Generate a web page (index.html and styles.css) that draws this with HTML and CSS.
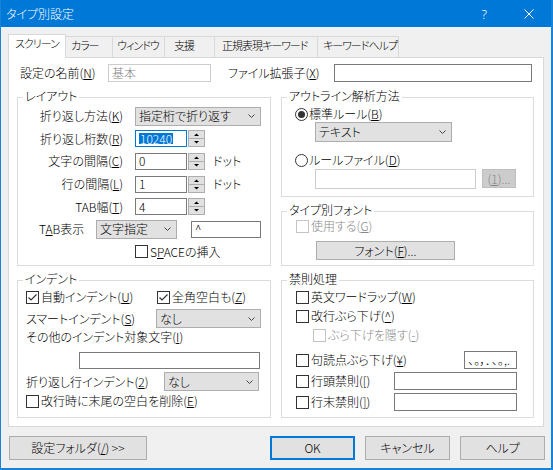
FILE: index.html
```html
<!DOCTYPE html>
<html lang="ja">
<head>
<meta charset="utf-8">
<title>タイプ別設定</title>
<link rel="stylesheet" href="styles.css">
</head>
<body>
<div class="window">
  <div class="titlebar">
    <span class="title">タイプ別設定</span>
    <span class="help">?</span>
    <svg class="close" width="10" height="10" viewBox="0 0 10 10"><path d="M0.5 0.5L9.5 9.5M9.5 0.5L0.5 9.5" stroke="#fff" stroke-width="1"/></svg>
  </div>
  <div class="client">
    <div class="tabs">
      <div class="tab active t1">スクリーン</div>
      <div class="tab t2">カラー</div>
      <div class="tab t3">ウィンドウ</div>
      <div class="tab t4">支援</div>
      <div class="tab t5">正規表現キーワード</div>
      <div class="tab t6 last">キーワードヘルプ</div>
    </div>
    <div class="page">
      <div class="name-row">
        <span class="name-lbl">設定の名前(<u>N</u>)</span>
        <div class="edit disabled w-name">基本</div>
        <span class="ext-lbl">ファイル拡張子(<u>X</u>)</span>
        <div class="edit w-ext"></div>
      </div>
      <div class="columns">
        <div class="col col-left">
          <div class="group g-layout">
            <div class="gtitle">レイアウト</div>
            <div class="lrow">
              <span class="lbl-r">折り返し方法(<u>K</u>)</span>
              <div class="combo w-wrap"><span>指定桁で折り返す</span><svg class="chev" width="7" height="4" viewBox="0 0 7 4"><polyline points="0.5,0.5 3.5,3.5 6.5,0.5" fill="none" stroke="#444"/></svg></div>
            </div>
            <div class="lrow">
              <span class="lbl-r">折り返し桁数(<u>R</u>)</span>
              <div class="spin">
                <div class="edit spin-edit focus"><span class="sel">10240</span></div>
                <svg class="updown" width="17" height="17" viewBox="0 0 17 17"><rect x="0.5" y="0.5" width="16" height="16" fill="#e1e1e1" stroke="#adadad"/><line x1="1" y1="8.5" x2="16" y2="8.5" stroke="#adadad"/><path d="M8.5 3.5L11 6L6 6Z" fill="#000"/><path d="M6 11L11 11L8.5 13.5Z" fill="#000"/></svg>
              </div>
            </div>
            <div class="lrow">
              <span class="lbl-r">文字の間隔(<u>C</u>)</span>
              <div class="spin">
                <div class="edit spin-edit">0</div>
                <svg class="updown" width="17" height="17" viewBox="0 0 17 17"><rect x="0.5" y="0.5" width="16" height="16" fill="#e1e1e1" stroke="#adadad"/><line x1="1" y1="8.5" x2="16" y2="8.5" stroke="#adadad"/><path d="M8.5 3.5L11 6L6 6Z" fill="#000"/><path d="M6 11L11 11L8.5 13.5Z" fill="#000"/></svg>
              </div>
              <span class="unit">ドット</span>
            </div>
            <div class="lrow">
              <span class="lbl-r">行の間隔(<u>L</u>)</span>
              <div class="spin">
                <div class="edit spin-edit">1</div>
                <svg class="updown" width="17" height="17" viewBox="0 0 17 17"><rect x="0.5" y="0.5" width="16" height="16" fill="#e1e1e1" stroke="#adadad"/><line x1="1" y1="8.5" x2="16" y2="8.5" stroke="#adadad"/><path d="M8.5 3.5L11 6L6 6Z" fill="#000"/><path d="M6 11L11 11L8.5 13.5Z" fill="#000"/></svg>
              </div>
              <span class="unit">ドット</span>
            </div>
            <div class="lrow">
              <span class="lbl-r">TAB幅(<u>T</u>)</span>
              <div class="spin">
                <div class="edit spin-edit">4</div>
                <svg class="updown" width="17" height="17" viewBox="0 0 17 17"><rect x="0.5" y="0.5" width="16" height="16" fill="#e1e1e1" stroke="#adadad"/><line x1="1" y1="8.5" x2="16" y2="8.5" stroke="#adadad"/><path d="M8.5 3.5L11 6L6 6Z" fill="#000"/><path d="M6 11L11 11L8.5 13.5Z" fill="#000"/></svg>
              </div>
            </div>
            <div class="lrow">
              <span class="lbl-tab">T<u>A</u>B表示</span>
              <div class="combo w-tabsel"><span>文字指定</span><svg class="chev" width="7" height="4" viewBox="0 0 7 4"><polyline points="0.5,0.5 3.5,3.5 6.5,0.5" fill="none" stroke="#444"/></svg></div>
              <div class="edit w-caret">^</div>
            </div>
            <div class="lrow row-space">
              <span class="cb"></span><span>S<u>P</u>ACEの挿入</span>
            </div>
          </div>

          <div class="group g-indent">
            <div class="gtitle">インデント</div>
            <div class="irow r1">
              <div class="chk w-auto"><span class="cb on"><svg width="11" height="11" viewBox="0 0 11 11"><polyline points="1.5,5.5 4,8 9.5,2.5" fill="none" stroke="#333" stroke-width="1.2"/></svg></span><span>自動インデント(<u>U</u>)</span></div>
              <div class="chk"><span class="cb on"><svg width="11" height="11" viewBox="0 0 11 11"><polyline points="1.5,5.5 4,8 9.5,2.5" fill="none" stroke="#333" stroke-width="1.2"/></svg></span><span>全角空白も(<u>Z</u>)</span></div>
            </div>
            <div class="irow r2">
              <span class="w-smart">スマートインデント(<u>S</u>)</span>
              <div class="combo w-smartsel"><span>なし</span><svg class="chev" width="7" height="4" viewBox="0 0 7 4"><polyline points="0.5,0.5 3.5,3.5 6.5,0.5" fill="none" stroke="#444"/></svg></div>
            </div>
            <div class="irow r3"><span>その他のインデント対象文字(<u>I</u>)</span></div>
            <div class="irow r4"><div class="edit w-other"></div></div>
            <div class="irow r5">
              <span class="w-wrapind">折り返し行インデント(<u>2</u>)</span>
              <div class="combo w-wrapsel"><span>なし</span><svg class="chev" width="7" height="4" viewBox="0 0 7 4"><polyline points="0.5,0.5 3.5,3.5 6.5,0.5" fill="none" stroke="#444"/></svg></div>
            </div>
            <div class="irow r6">
              <div class="chk"><span class="cb"></span><span>改行時に末尾の空白を削除(<u>E</u>)</span></div>
            </div>
          </div>
        </div>

        <div class="col col-right">
          <div class="group g-outline">
            <div class="gtitle">アウトライン解析方法</div>
            <div class="orow o1"><span class="radio on"></span><span>標準ルール(<u>B</u>)</span></div>
            <div class="combo w-rule"><span>テキスト</span><svg class="chev" width="7" height="4" viewBox="0 0 7 4"><polyline points="0.5,0.5 3.5,3.5 6.5,0.5" fill="none" stroke="#444"/></svg></div>
            <div class="orow o2"><span class="radio"></span><span>ルールファイル(<u>D</u>)</span></div>
            <div class="orow o3">
              <div class="edit disabled w-rulefile"></div>
              <div class="btn btn-dis w-ref">(<u>1</u>)...</div>
            </div>
          </div>

          <div class="group g-font">
            <div class="gtitle">タイプ別フォント</div>
            <div class="frow f1"><span class="cb dis"></span><span class="dis-text">使用する(<u>G</u>)</span></div>
            <div class="btn w-font">フォント(<u>F</u>)...</div>
          </div>

          <div class="group g-kinsoku">
            <div class="gtitle">禁則処理</div>
            <div class="krow k1"><span class="cb"></span><span>英文ワードラップ(<u>W</u>)</span></div>
            <div class="krow k2"><span class="cb"></span><span>改行ぶら下げ(<u>^</u>)</span></div>
            <div class="krow k3"><span class="cb dis"></span><span class="dis-text">ぶら下げを隠す(<u>-</u>)</span></div>
            <div class="krow k4"><span class="cb"></span><span>句読点ぶら下げ(<u>¥</u>)</span><div class="edit w-kuto"><span class="kuto">、。，．､｡,.</span></div></div>
            <div class="krow k5"><span class="cb"></span><span>行頭禁則(<u>[</u>)</span><div class="edit w-kin"></div></div>
            <div class="krow k6"><span class="cb"></span><span>行末禁則(<u>]</u>)</span><div class="edit w-kin"></div></div>
          </div>
        </div>
      </div>
    </div>
    <div class="buttons">
      <div class="btn w-folder">設定フォルダ(<u>/</u>) &gt;&gt;</div>
      <div class="btn btn-default w-ok">OK</div>
      <div class="btn w-cancel">キャンセル</div>
      <div class="btn w-help">ヘルプ</div>
    </div>
  </div>
</div>
</body>
</html>
```
FILE: styles.css
```css
* { box-sizing: border-box; }
html, body { margin: 0; padding: 0; }
body {
  width: 553px;
  height: 470px;
  overflow: hidden;
  background: #f0f0f0;
  font-family: "Noto Sans CJK JP", "Noto Sans", sans-serif;
  font-size: 12px;
  font-weight: 300;
  line-height: 14px;
  color: #000;
  font-feature-settings: "palt";
}
u { text-underline-offset: 1px; }

.window {
  width: 553px;
  height: 470px;
  border-left: 1px solid #1883d7;
  border-right: 2px solid #1883d7;
  border-bottom: 2px solid #1883d7;
  background: #f0f0f0;
}
.titlebar {
  height: 27px;
  background: #0078d7;
  color: #fff;
  display: flex;
  align-items: center;
  padding-left: 5px;
}
.title { flex: 1; font-size: 12px; }
.help { font-family: "Noto Sans", sans-serif; font-size: 13px; margin-right: 37px; }
.close { margin-right: 17px; }

.client { padding: 7px 0 0 7px; }

/* tabs */
.tabs { display: flex; align-items: flex-end; height: 23px; }
.tab {
  height: 21px;
  border: 1px solid #d9d9d9;
  border-bottom: 0;
  border-right: 0;
  background: #f0f0f0;
  font-size: 11px;
  line-height: 17px;
  white-space: nowrap;
  letter-spacing: -1px;
}
.tab.active {
  height: 24px;
  margin-bottom: -1px;
  background: #fff;
  border-right: 1px solid #d9d9d9;
  position: relative;
  z-index: 1;
}
.tab.active + .tab { border-left: 0; }
.tab.last { border-right: 1px solid #d9d9d9; }
.t1 { width: 58px; padding-left: 6px; }
.t2 { width: 46px; padding-left: 5px; }
.t3 { width: 52px; padding-left: 4px; }
.t4 { width: 50px; padding-left: 9px; }
.t5 { width: 103px; padding-left: 7px; }
.t6 { width: 82px; padding-left: 5px; }

/* page */
.page {
  width: 536px;
  height: 370px;
  border: 1px solid #d9d9d9;
  background: #fff;
}

/* generic controls */
.edit {
  height: 18px;
  border: 1px solid #7a7a7a;
  background: #fff;
  padding-left: 3px;
  display: flex;
  align-items: center;
  flex: none;
}
.edit.disabled { border-color: #cccccc; color: #838383; }
.edit.focus { border-color: #0078d7; }
.combo {
  height: 19px;
  border: 1px solid #adadad;
  background: #e1e1e1;
  display: flex;
  align-items: center;
  justify-content: space-between;
  padding: 0 5px 0 3px;
  flex: none;
}
.btn {
  border: 1px solid #adadad;
  background: #e1e1e1;
  display: flex;
  align-items: center;
  justify-content: center;
  flex: none;
}
.btn-dis { background: #cccccc; border-color: #bfbfbf; color: #838383; }
.btn-default { border: 2px solid #0078d7; }
.cb {
  width: 13px;
  height: 13px;
  border: 1px solid #333;
  background: #fff;
  margin-right: 2px;
  flex: none;
  display: flex;
  align-items: center;
  justify-content: center;
}
.cb.dis { border-color: #c4c4c4; }
.dis-text { color: #8a8a8a; }
.chk { display: flex; align-items: center; }
.radio {
  width: 13px;
  height: 13px;
  border-radius: 50%;
  border: 1px solid #333;
  background: #fff;
  margin-right: 1px;
  flex: none;
  display: flex;
  align-items: center;
  justify-content: center;
}
.radio.on::after {
  content: "";
  width: 7px;
  height: 7px;
  border-radius: 50%;
  background: #333;
}

/* name row */
.name-row {
  display: flex;
  align-items: center;
  height: 18px;
  margin: 6px 0 0 11px;
}
.name-lbl { width: 88px; flex: none; }
.w-name { width: 103px; }
.ext-lbl { width: 106px; margin-left: 17px; flex: none; }
.w-ext { width: 198px; }

/* columns & groups */
.columns {
  display: flex;
  gap: 10px;
  margin: 15px 0 0 8px;
}
.col { display: flex; flex-direction: column; gap: 14px; }
.col-left { width: 254px; }
.col-right { width: 253px; }
.group {
  position: relative;
  border: 1px solid #dcdcdc;
}
.gtitle {
  position: absolute;
  top: -9px;
  left: 5px;
  padding: 0 2px;
  background: #fff;
  line-height: 14px;
  white-space: nowrap;
}

/* layout group */
.g-layout { height: 169px; padding-top: 7px; }
.lrow { display: flex; align-items: center; height: 22.6px; }
.lbl-r { width: 105px; margin-right: 12px; text-align: right; flex: none; white-space: nowrap; }
.w-wrap { width: 126px; height: 19px; }
.spin { display: flex; align-items: center; flex: none; }
.spin-edit { width: 52px; height: 17px; }
.updown { margin-left: 1px; }
.sel { background: #0078d7; color: #fff; padding: 0 1px; line-height: 11px; height: 11px; display: inline-flex; align-items: center; }
.unit { margin-left: 8px; }
.lbl-tab { margin-left: 21px; width: 57px; flex: none; }
.w-tabsel { width: 81px; }
.w-caret { width: 70px; height: 17px; margin-left: 14px; }
.row-space { padding-left: 117px; }

/* indent group */
.g-indent { height: 138px; padding: 8px 0 0 8px; }
.irow { display: flex; align-items: center; }
.r1 { height: 16px; }
.w-auto { width: 131px; }
.r2 { height: 19px; margin-top: 4px; }
.w-smart { width: 130px; flex: none; }
.w-smartsel { width: 105px; }
.r3 { height: 16px; margin-top: 1px; }
.r4 { margin-top: 7px; padding-left: 53px; }
.w-other { width: 181px; height: 17px; }
.r5 { height: 19px; margin-top: 3px; }
.w-wrapind { width: 138px; flex: none; }
.w-wrapsel { width: 95px; }
.r6 { height: 16px; margin-top: 2px; }

/* outline group */
.g-outline { height: 100px; padding-top: 8px; }
.orow { display: flex; align-items: center; }
.o1 { height: 16px; padding-left: 13px; }
.w-rule { width: 137px; height: 20px; margin-left: 33px; }
.o2 { height: 16px; margin-top: 10px; padding-left: 13px; }
.o3 { margin-top: 1px; padding-left: 33px; align-items: flex-start; }
.w-rulefile { width: 161px; height: 20px; }
.w-ref { width: 34px; height: 19px; margin-left: 6px; }

/* font group */
.g-font { height: 55px; padding-top: 6px; }
.frow { display: flex; align-items: center; height: 16px; padding-left: 14px; }
.w-font { width: 139px; height: 19px; margin: 7px 0 0 34px; }

/* kinsoku group */
.g-kinsoku { height: 138px; padding: 8px 16px 0 14px; }
.krow { display: flex; align-items: center; }
.k1 { height: 16px; }
.k2 { height: 16px; margin-top: 3px; }
.k3 { height: 16px; margin-top: 3px; padding-left: 17px; }
.k4 { height: 18px; margin-top: 8px; }
.k5 { height: 18px; margin-top: 3px; }
.k6 { height: 18px; margin-top: 3px; }
.w-kuto { width: 53px; margin-left: auto; padding-left: 3px; }
.kuto { font-size: 12px; }
.w-kin { width: 123px; margin-left: auto; }

/* bottom buttons */
.buttons { display: flex; margin-top: 9px; height: 24px; }
.buttons .btn { height: 24px; }
.w-folder { width: 138px; margin-left: 1px; }
.w-ok { width: 85px; margin-left: 123px; }
.w-cancel { width: 85px; margin-left: 10px; }
.w-help { width: 85px; margin-left: 10px; }
```
